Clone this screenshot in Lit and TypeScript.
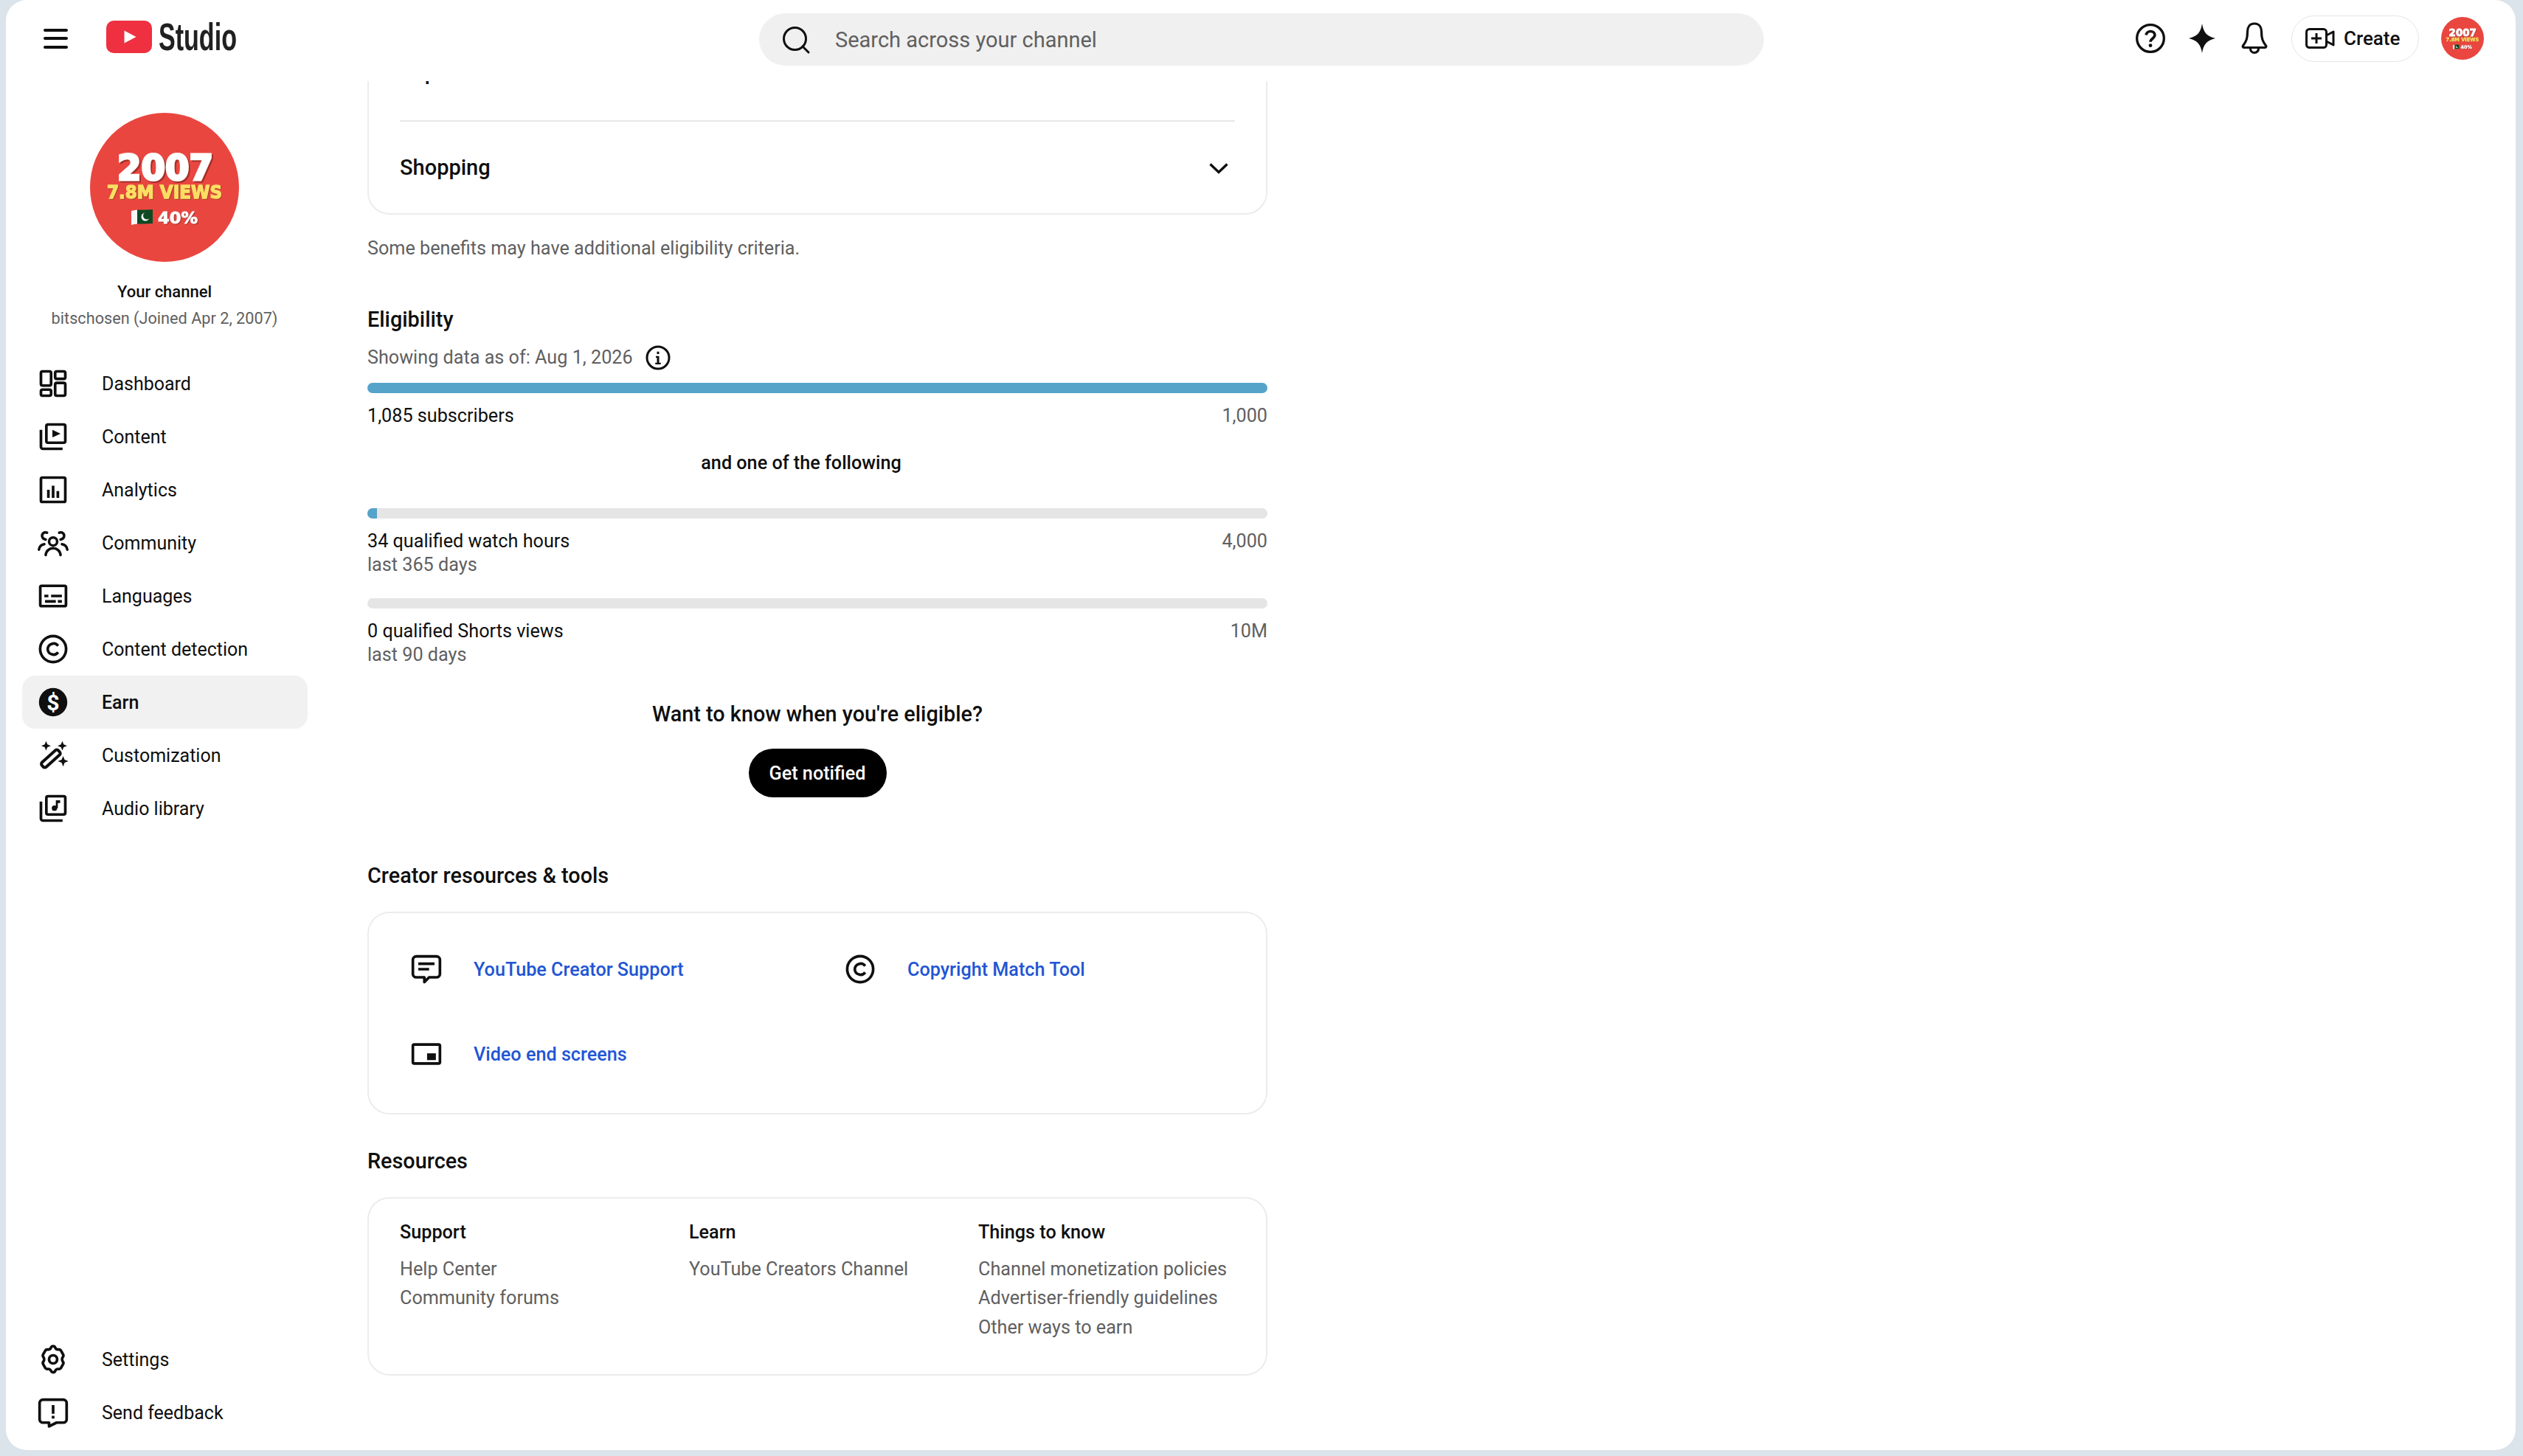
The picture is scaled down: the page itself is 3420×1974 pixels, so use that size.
import { LitElement, html, css, svg } from 'lit';
import { customElement } from 'lit/decorators.js';

const STROKE = '#0f0f0f';

// 24x24 outline icons, same box as the originals
const icons: Record<string, unknown> = {
  dashboard: svg`<g fill="none" stroke=${STROKE} stroke-width="2"><rect x="3" y="3" width="7.5" height="10.500" rx="1.2"/><rect x="13.5" y="3" width="7.5" height="5.500" rx="1.2"/><rect x="3" y="16.500" width="7.5" height="4.500" rx="1.2"/><rect x="13.5" y="11.500" width="7.5" height="9.500" rx="1.2"/></g>`,
  content: svg`<g fill="none" stroke=${STROKE} stroke-width="2"><rect x="7" y="3" width="14" height="13.500" rx="1.2"/><path d="M3 7v12.500a1.500 1.500 0 0 0 1.500 1.500H19"/></g><path d="M11.500 7l6 2.800-6 2.800z" fill=${STROKE}/>`,
  analytics: svg`<rect x="3" y="3" width="18" height="18" rx="1" fill="none" stroke=${STROKE} stroke-width="2"/><path d="M7.500 12h2v6h-2zM11 9h2v9h-2zM14.500 13h2v5h-2z" fill=${STROKE}/>`,
  community: svg`<g fill="none" stroke=${STROKE} stroke-width="1.900" stroke-linecap="round"><circle cx="12" cy="11" r="3"/><path d="M6.500 21c.3-3 2.600-5 5.500-5s5.200 2 5.500 5"/><path d="M7.500 4.500c-2.200-.8-4 .8-3.600 2.800.3 1.300 1.200 2 2.600 2.200"/><path d="M16.500 4.500c2.200-.8 4 .8 3.600 2.800-.3 1.300-1.200 2-2.600 2.200"/><path d="M1.500 17c.4-2.300 1.900-3.700 4-4M22.500 17c-.4-2.300-1.900-3.700-4-4"/></g>`,
  languages: svg`<rect x="2.500" y="4.500" width="19" height="15" rx="1" fill="none" stroke=${STROKE} stroke-width="2"/><path d="M5.500 11h3v2h-3zM10.500 11h8v2h-8zM6 15h8v2H6zM15.500 15h3v2h-3z" fill=${STROKE}/>`,
  copyright: svg`<circle cx="12" cy="12" r="9.600" fill="none" stroke=${STROKE} stroke-width="2"/><path d="M15.700 9.600A4.300 4.300 0 0 0 8 12a4.300 4.300 0 0 0 7.700 2.400" fill="none" stroke=${STROKE} stroke-width="2"/>`,
  earn: svg`<circle cx="12" cy="12" r="10.500" fill=${STROKE}/><text x="12" y="17.800" text-anchor="middle" font-family="Roboto, sans-serif" font-weight="700" font-size="16.500" fill="#fff">$</text>`,
  custom: svg`<rect x="-8.200" y="-2.300" width="16.400" height="4.600" rx="1.600" transform="translate(10.300 14.500) rotate(-42)" fill="none" stroke=${STROKE} stroke-width="2.200"/><path d="M6.800 1.500l1 2.500 2.500 1-2.500 1-1 2.500-1-2.500-2.500-1 2.500-1zM18.800 1.500l1 2.500 2.500 1-2.500 1-1 2.500-1-2.500-2.500-1 2.500-1zM19.400 12.500l1.100 2.800 2.800 1.100-2.800 1.100-1.100 2.800-1.100-2.800-2.800-1.100 2.800-1.100z" fill=${STROKE}/>`,
  audio: svg`<g fill="none" stroke=${STROKE} stroke-width="2"><rect x="7" y="3" width="14" height="13.500" rx="1.200"/><path d="M3 7v12.500a1.500 1.500 0 0 0 1.500 1.500H19"/></g><circle cx="13" cy="11.800" r="2" fill=${STROKE}/><path d="M14 11.800V6h3.200v2h-1.700v3.800z" fill=${STROKE}/>`,
  settings: svg`<path d="M12 2.200c.8 0 1.300.5 1.600 1.200.4.900 1.300 1.400 2.300 1.300.8-.1 1.500.1 1.900.8l1.600 2.900c.4.700.2 1.400-.3 2-.6.800-.6 2.300 0 3.100.5.600.7 1.300.3 2l-1.600 2.800c-.4.700-1.100.9-1.900.8-1-.1-1.900.4-2.300 1.300-.3.700-.8 1.200-1.600 1.200s-1.300-.5-1.600-1.200c-.4-.9-1.300-1.400-2.300-1.300-.8.100-1.500-.1-1.900-.8l-1.600-2.800c-.4-.7-.2-1.400.3-2 .6-.8.600-2.300 0-3.100-.5-.6-.7-1.300-.3-2l1.600-2.900c.4-.7 1.100-.9 1.900-.8 1 .1 1.900-.4 2.300-1.300.3-.7.8-1.200 1.600-1.200z" fill="none" stroke=${STROKE} stroke-width="2" stroke-linejoin="round"/><circle cx="12" cy="12" r="3" fill="none" stroke=${STROKE} stroke-width="2"/>`,
  feedback: svg`<path d="M4.500 2.500h15A2.500 2.500 0 0 1 22 5v12a2.500 2.500 0 0 1-2.500 2.500h-5l-5.500 2.800v-2.800H4.500A2.500 2.500 0 0 1 2 17V5a2.500 2.500 0 0 1 2.500-2.500z" fill="none" stroke=${STROKE} stroke-width="2" stroke-linejoin="round"/><path d="M11 6.500h2v6.500h-2zM11 14.500h2v2h-2z" fill=${STROKE}/>`,
  support: svg`<path d="M4.500 2.500h15A2.500 2.500 0 0 1 22 5v10.500a2.500 2.500 0 0 1-2.500 2.500h-5.500l-3.500 3.500V18H4.500A2.500 2.500 0 0 1 2 15.500V5a2.500 2.500 0 0 1 2.500-2.500z" fill="none" stroke=${STROKE} stroke-width="2" stroke-linejoin="round"/><path d="M6 7h12v2H6zM6 11h8v2H6z" fill=${STROKE}/>`,
  endscreen: svg`<rect x="2" y="5" width="20" height="14" rx="1" fill="none" stroke=${STROKE} stroke-width="2"/><rect x="12.500" y="11.500" width="6.500" height="5" fill=${STROKE}/>`,
};

const icon = (name: string, size = 44) =>
  html`<svg width=${size} height=${size} viewBox="0 0 24 24">${icons[name]}</svg>`;

const navTop = [
  ['dashboard', 'Dashboard'],
  ['content', 'Content'],
  ['analytics', 'Analytics'],
  ['community', 'Community'],
  ['languages', 'Languages'],
  ['copyright', 'Content detection'],
  ['earn', 'Earn'],
  ['custom', 'Customization'],
  ['audio', 'Audio library'],
];

const chevron = html`<svg width="30" height="18" viewBox="0 0 30 18"><path d="M3.500 3.500 15 14.500 26.500 3.500" fill="none" stroke=${STROKE} stroke-width="3.400"/></svg>`;

@customElement('channel-badge')
class ChannelBadge extends LitElement {
  static properties = { small: { type: Boolean, reflect: true } };

  static styles = css`
    :host {
      display: block;
      width: 202px;
      height: 202px;
    }
    :host([small]) {
      width: 58px;
      height: 58px;
    }
    svg {
      display: block;
      width: 100%;
      height: 100%;
    }
    .big {
      filter: drop-shadow(2px 2px 0 #a33029);
    }
    .mid {
      filter: drop-shadow(1.5px 1.5px 0 #a8431f);
    }
    .low {
      filter: drop-shadow(1px 1px 0 #a33029);
    }
  `;

  render() {
    return html`<svg viewBox="0 0 202 202">
      <circle cx="101" cy="101" r="101" fill="#ea4640"/>
      <g font-family="'DejaVu Sans', sans-serif" font-weight="700" text-anchor="middle">
        <text class="big" x="102" y="91" font-size="48" fill="#fff" textLength="130" lengthAdjust="spacingAndGlyphs" stroke="#fff" stroke-width="3.200">2007</text>
        <text class="mid" x="101" y="116" font-size="24" fill="#fbdf64" textLength="156" lengthAdjust="spacingAndGlyphs" stroke="#fbdf64" stroke-width="1.400">7.8M VIEWS</text>
        <text class="low" x="119" y="150" font-size="22" fill="#fff" textLength="54" lengthAdjust="spacingAndGlyphs" stroke="#fff" stroke-width=".9">40%</text>
      </g>
      <path d="M56 133c3-1 5-1 8-1.500v19c-3 .5-5 .5-8 1.500z" fill="#f7f7f7"/>
      <path d="M64 131.500c7 0 14 0 21-.5v19c-7 .5-14 .5-21 .5z" fill="#0d4a24"/>
      <circle cx="75" cy="141" r="5.500" fill="#fff"/>
      <circle cx="77" cy="139.500" r="5" fill="#0d4a24"/>
    </svg>`;
  }
}

@customElement('app-root')
export class AppRoot extends LitElement {
  static styles = css`
    :host {
      display: block;
      width: 3420px;
      height: 1974px;
      background: #dbe3eb;
      font-family: Roboto, 'Noto Sans', sans-serif;
      color: #0f0f0f;
      font-size: 25.2px;
    }
    .panel {
      box-sizing: border-box;
      margin-left: 8px;
      width: 3402px;
      height: 1966px;
      background: #fff;
      border-radius: 28px;
      display: flex;
      flex-direction: column;
      overflow: hidden;
    }
    svg {
      display: block;
      flex: none;
    }

    /* top bar */
    .top {
      height: 110px;
      flex: none;
      position: relative;
      display: flex;
      align-items: center;
      padding-bottom: 6px;
      box-sizing: border-box;
    }
    .burger {
      margin-left: 51px;
      width: 33px;
      display: flex;
      flex-direction: column;
      gap: 7.500px;
    }
    .burger span {
      height: 4px;
      background: #0f0f0f;
      border-radius: 2px;
    }
    .logo {
      margin-left: 52px;
      display: flex;
      align-items: center;
      gap: 9px;
      margin-top: -4px;
    }
    .wordmark {
      font-family: 'Liberation Sans', sans-serif;
      font-size: 52px;
      font-weight: 700;
      color: #212121;
      display: inline-block;
      transform: scaleX(0.655);
      transform-origin: left center;
      width: 110px;
    }
    .search {
      position: absolute;
      left: 1021px;
      top: 18px;
      width: 1362px;
      height: 71px;
      border-radius: 36px;
      background: #f0f0f0;
      display: flex;
      align-items: center;
      gap: 32px;
      padding-left: 27px;
      box-sizing: border-box;
      color: #606060;
      font-size: 29px;
    }
    .actions {
      margin-left: auto;
      display: flex;
      align-items: center;
      margin-right: 43px;
    }
    .help {
      margin-right: 28px;
    }
    .spark {
      margin-right: 33px;
    }
    .create {
      display: flex;
      align-items: center;
      gap: 12px;
      height: 63px;
      width: 173px;
      box-sizing: border-box;
      padding-left: 18px;
      border: 1px solid #e5e5e5;
      border-radius: 32px;
      font-size: 26px;
      font-weight: 500;
      margin-left: 32px;
      margin-right: 30px;
    }

    /* body */
    .body {
      flex: 1;
      min-height: 0;
      display: flex;
    }
    .side {
      width: 452px;
      flex: none;
      display: flex;
      flex-direction: column;
      padding-bottom: 15px;
      box-sizing: border-box;
    }
    .me {
      display: flex;
      flex-direction: column;
      align-items: center;
      width: 430px;
      padding-top: 43px;
    }
    .me b {
      margin-top: 26px;
      font-weight: 500;
      font-size: 22px;
      line-height: 30px;
    }
    .me span {
      margin-top: 6px;
      color: #606060;
      font-size: 21.700px;
      line-height: 30px;
    }
    nav {
      margin-top: 37px;
      margin-left: 22px;
      width: 387px;
    }
    nav.end {
      margin-top: auto;
    }
    .item {
      display: flex;
      align-items: center;
      height: 72px;
      padding-left: 20px;
      gap: 44px;
      border-radius: 18px;
      font-size: 25px;
    }
    .item.on {
      background: #f1f1f1;
      font-weight: 500;
    }

    /* main column, scrolled part way down the page */
    main {
      width: 1220px;
      flex: none;
      overflow: hidden;
      margin-left: 38px;
    }
    .card {
      border: 2px solid #ececec;
      border-radius: 30px;
      box-sizing: border-box;
    }
    .benefits {
      margin-top: -77px;
      padding: 0 42px;
      height: 258px;
    }
    .row {
      height: 128px;
      box-sizing: border-box;
      display: flex;
      align-items: center;
      justify-content: space-between;
      font-size: 29px;
      font-weight: 500;
      padding-right: 7px;
    }
    .row span {
      margin-bottom: 2px;
    }
    .row + .row {
      border-top: 2px solid #e8e8e8;
    }
    .note {
      margin-top: 29px;
      color: #606060;
      line-height: 34px;
    }
    h2 {
      margin: 0;
      font-size: 28.800px;
      font-weight: 500;
      line-height: 40px;
    }
    .elig {
      margin-top: 59px;
    }
    .asof {
      margin-top: 14px;
      height: 36px;
      display: flex;
      align-items: center;
      gap: 16px;
      color: #606060;
      line-height: 34px;
    }
    .track {
      height: 14px;
      border-radius: 7px;
      background: #e5e5e5;
      overflow: hidden;
    }
    .asof + .track {
      margin-top: 16px;
    }
    .fill {
      height: 100%;
      background: #55a3c9;
    }
    .stat {
      margin-top: 15px;
      display: flex;
      justify-content: space-between;
      line-height: 32px;
    }
    .stat .max {
      color: #606060;
    }
    .sub {
      color: #606060;
      line-height: 32px;
    }
    .meter {
      margin-top: 29px;
    }
    .or {
      margin-top: 32px;
      text-align: center;
      font-weight: 500;
      line-height: 32px;
      padding-right: 44px;
      margin-bottom: 45px;
    }
    .ask {
      margin-top: 44px;
      display: flex;
      flex-direction: column;
      align-items: center;
    }
    .ask b {
      font-size: 28.800px;
      font-weight: 500;
      line-height: 40px;
    }
    .btn {
      margin-top: 27px;
      height: 66px;
      width: 187px;
      border-radius: 33px;
      background: #000;
      color: #fff;
      font-weight: 500;
      display: flex;
      align-items: center;
      justify-content: center;
    }
    .tools-head {
      margin-top: 86px;
    }
    .tools {
      margin-top: 29px;
      height: 275px;
      padding: 38px 0 0 56px;
      display: grid;
      grid-template-columns: 588px 1fr;
      grid-auto-rows: 115px;
      color: #2255d4;
      font-weight: 500;
    }
    .tool {
      display: flex;
      align-items: center;
      gap: 42px;
      height: 76px;
    }
    .res-head {
      margin-top: 43px;
    }
    .res {
      margin-top: 29px;
      height: 242px;
      padding: 26px 42px;
      display: grid;
      grid-template-columns: 392px 392px 1fr;
      color: #606060;
      line-height: 39.500px;
    }
    .res b {
      display: block;
      color: #0f0f0f;
      font-weight: 500;
      margin-bottom: 10px;
    }
    .res span {
      display: block;
      white-space: nowrap;
    }
  `;

  renderItem(it: string[]) {
    return html`<div class="item ${it[1] === 'Earn' ? 'on' : ''}">${icon(it[0])}<span>${it[1]}</span></div>`;
  }

  render() {
    return html`<div class="panel">
      <header class="top">
        <div class="burger"><span></span><span></span><span></span></div>
        <div class="logo">
          <svg width="62" height="44" viewBox="0 0 62 44">
            <rect width="62" height="44" rx="10" fill="#ee3040"/>
            <path d="M24.500 13.500 40.500 22 24.500 30.500z" fill="#fff"/>
          </svg>
          <span class="wordmark">Studio</span>
        </div>
        <div class="search">
          <svg width="44" height="44" viewBox="0 0 44 44"><circle cx="21.500" cy="20.500" r="15" fill="none" stroke=${STROKE} stroke-width="3"/><path d="M32 31l8 8" stroke=${STROKE} stroke-width="3" stroke-linecap="round"/></svg>
          <span>Search across your channel</span>
        </div>
        <div class="actions">
          <svg class="help" width="44" height="44" viewBox="0 0 24 24">
            <circle cx="12" cy="12" r="10" fill="none" stroke=${STROKE} stroke-width="1.800"/>
            <path d="M8.800 9.500A3.200 3.200 0 0 1 12 6.800c1.900 0 3.200 1.200 3.200 2.800 0 2.500-3.200 2.500-3.200 5" fill="none" stroke=${STROKE} stroke-width="2"/>
            <circle cx="12" cy="17.300" r="1.300" fill=${STROKE}/>
          </svg>
          <svg class="spark" width="40" height="44" viewBox="0 0 40 44"><path d="M20 2c2 12 6 17 18 20-12 3-16 8-18 20C18 30 14 25 2 22 14 19 18 14 20 2z" fill=${STROKE}/></svg>
          <svg width="36" height="46" viewBox="0 0 36 46"><path d="M18 3c-6.500 0-9.500 5-9.500 11 0 9-1.500 13-6 19-.8 1.200 0 2.500 1.500 2.500h28c1.500 0 2.300-1.300 1.500-2.500-4.500-6-6-10-6-19 0-6-3-11-9.500-11z" fill="none" stroke=${STROKE} stroke-width="3.200"/><path d="M12.500 37a5.500 5.500 0 0 0 11 0" fill="none" stroke=${STROKE} stroke-width="3.200"/></svg>
          <div class="create">
            <svg width="40" height="34" viewBox="0 0 40 34"><rect x="1.500" y="4.500" width="27" height="25" rx="4" fill="none" stroke=${STROKE} stroke-width="3"/><path d="M15 10v14M8 17h14" stroke=${STROKE} stroke-width="3"/><path d="M28.500 13 38 8v18l-9.500-5" fill="none" stroke=${STROKE} stroke-width="3" stroke-linejoin="round"/></svg>
            <span>Create</span>
          </div>
          <channel-badge small></channel-badge>
        </div>
      </header>

      <div class="body">
        <aside class="side">
          <div class="me">
            <channel-badge></channel-badge>
            <b>Your channel</b>
            <span>bitschosen (Joined Apr 2, 2007)</span>
          </div>
          <nav>${navTop.map((it) => this.renderItem(it))}</nav>
          <nav class="end">
            ${this.renderItem(['settings', 'Settings'])}
            ${this.renderItem(['feedback', 'Send feedback'])}
          </nav>
        </aside>

        <main>
          <div class="card benefits">
            <div class="row"><span>Supers</span>${chevron}</div>
            <div class="row"><span>Shopping</span>${chevron}</div>
          </div>
          <div class="note">Some benefits may have additional eligibility criteria.</div>

          <section class="elig">
            <h2>Eligibility</h2>
            <div class="asof">
              <span>Showing data as of: Aug 1, 2026</span>
              <svg width="36" height="36" viewBox="0 0 24 24"><circle cx="12" cy="12" r="10" fill="none" stroke=${STROKE} stroke-width="2"/><path d="M10 10.500h3v6h1.500v1.500h-5v-1.500H11v-4.500h-1zM11 6.500h2v2.200h-2z" fill=${STROKE}/></svg>
            </div>
            <div class="track"><div class="fill" style="width:100%"></div></div>
            <div class="stat"><span>1,085 subscribers</span><span class="max">1,000</span></div>
            <div class="or">and one of the following</div>
            <div class="track"><div class="fill" style="width:1.07%"></div></div>
            <div class="stat"><span>34 qualified watch hours</span><span class="max">4,000</span></div>
            <div class="sub">last 365 days</div>
            <div class="track meter"></div>
            <div class="stat"><span>0 qualified Shorts views</span><span class="max">10M</span></div>
            <div class="sub">last 90 days</div>
          </section>

          <div class="ask">
            <b>Want to know when you're eligible?</b>
            <div class="btn">Get notified</div>
          </div>

          <h2 class="tools-head">Creator resources &amp; tools</h2>
          <div class="card tools">
            <div class="tool">${icon('support')}<span>YouTube Creator Support</span></div>
            <div class="tool">${icon('copyright')}<span>Copyright Match Tool</span></div>
            <div class="tool">${icon('endscreen')}<span>Video end screens</span></div>
          </div>

          <h2 class="res-head">Resources</h2>
          <div class="card res">
            <div><b>Support</b><span>Help Center</span><span>Community forums</span></div>
            <div><b>Learn</b><span>YouTube Creators Channel</span></div>
            <div><b>Things to know</b><span>Channel monetization policies</span><span>Advertiser-friendly guidelines</span><span>Other ways to earn</span></div>
          </div>
        </main>
      </div>
    </div>`;
  }
}

export { ChannelBadge };
